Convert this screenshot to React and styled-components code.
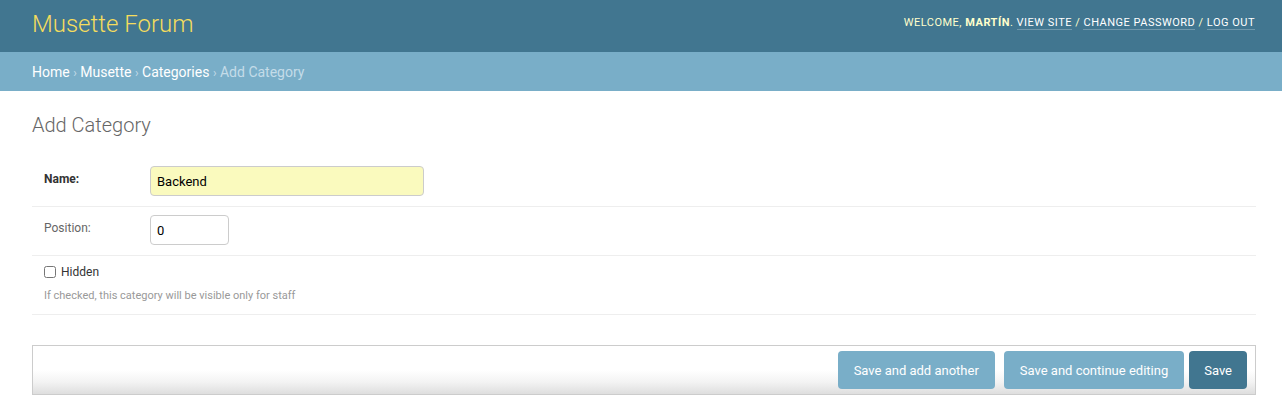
import React, { useState } from 'react';
import styled, { createGlobalStyle } from 'styled-components';

const GlobalStyle = createGlobalStyle`
    body {
        margin: 0;
        background: #fff;
        font-family: Roboto, "Liberation Sans", sans-serif;
        color: #333;
    }
`;

function App() {
    const [name, setName] = useState('Backend');
    const [position, setPosition] = useState('0');
    const [hidden, setHidden] = useState(false);

    return (
        <>
            <GlobalStyle />
            <Header>
                <Branding>Musette Forum</Branding>
                <UserTools>
                    Welcome, <strong>Martín</strong>.{' '}
                    <ToolLink>View site</ToolLink> / <ToolLink>Change password</ToolLink> /{' '}
                    <ToolLink>Log out</ToolLink>
                </UserTools>
            </Header>

            <Breadcrumbs>
                <Crumb>Home</Crumb> <Sep>›</Sep> <Crumb>Musette</Crumb> <Sep>›</Sep>{' '}
                <Crumb>Categories</Crumb> <Sep>›</Sep> <Current>Add Category</Current>
            </Breadcrumbs>

            <Content>
                <Title>Add Category</Title>

                <form onSubmit={(e) => e.preventDefault()}>
                    <FormRow $pt={10} $pb={10}>
                        <Label $required>Name:</Label>
                        <TextInput $width={274} $filled value={name} onChange={(e) => setName(e.target.value)} />
                    </FormRow>
                    <FormRow $pt={8} $pb={10}>
                        <Label>Position:</Label>
                        <TextInput $width={79} value={position} onChange={(e) => setPosition(e.target.value)} />
                    </FormRow>
                    <CheckRow>
                        <CheckLabel>
                            <Checkbox type="checkbox" checked={hidden} onChange={(e) => setHidden(e.target.checked)} />
                            Hidden
                        </CheckLabel>
                        <Help>If checked, this category will be visible only for staff</Help>
                    </CheckRow>

                    <SubmitRow>
                        <SubmitButton type="button">Save and add another</SubmitButton>
                        <SubmitButton type="button">Save and continue editing</SubmitButton>
                        <SubmitButton type="submit" $primary>Save</SubmitButton>
                    </SubmitRow>
                </form>
            </Content>
        </>
    );
}

const Header = styled.header`
    height: 52px;
    background: #417690;
    display: flex;
    align-items: center;
    justify-content: space-between;
    padding: 0 27px 0 32px;
`;

const Branding = styled.h1`
    margin: 0;
    margin-top: -4px;
    font-size: 24px;
    font-weight: 300;
    color: #f5dd5d;
`;

const UserTools = styled.div`
    font-size: 11px;
    letter-spacing: 0.5px;
    text-transform: uppercase;
    color: #ffc;
    margin-top: -8px;

    strong {
        font-weight: 700;
        color: #ffc;
    }
`;

const ToolLink = styled.a`
    color: #fff;
    text-decoration: none;
    border-bottom: 1px solid rgba(255, 255, 255, 0.25);
    cursor: pointer;
`;

const Breadcrumbs = styled.nav`
    height: 39px;
    line-height: 41px;
    box-sizing: border-box;
    background: #79aec8;
    padding: 0 32px;
    font-size: 14px;
    color: #fff;
    overflow: hidden;
`;

const Crumb = styled.a`
    color: #fff;
    cursor: pointer;
`;

const Sep = styled.span`
    color: #c4dce8;
    font-size: 12px;
`;

const Current = styled.span`
    color: #c4dce8;
`;

const Content = styled.main`
    padding: 22px 26px 20px 32px;
`;

const Title = styled.h2`
    margin: 0 0 19px;
    font-size: 20px;
    font-weight: 300;
    color: #666;
`;

const FormRow = styled.div`
    display: flex;
    align-items: flex-start;
    padding: ${(p) => p.$pt}px 12px ${(p) => p.$pb}px;
    border-bottom: 1px solid #eee;
`;

const Label = styled.label`
    width: 106px;
    padding-top: 6px;
    font-size: 12px;
    font-weight: ${(p) => (p.$required ? 700 : 400)};
    color: ${(p) => (p.$required ? '#333' : '#666')};
`;

const TextInput = styled.input`
    box-sizing: border-box;
    width: ${(p) => p.$width}px;
    height: 30px;
    padding: 5px 6px;
    border: 1px solid #ccc;
    border-radius: 4px;
    background: ${(p) => (p.$filled ? '#fafabe' : '#fff')};
    font-family: Roboto, "Liberation Sans", sans-serif;
    font-size: 13px;
    color: #000;
    outline: none;
`;

const CheckRow = styled.div`
    padding: 9px 12px 12px;
    border-bottom: 1px solid #eee;
`;

const CheckLabel = styled.label`
    display: flex;
    align-items: center;
    gap: 5px;
    font-size: 12px;
    color: #333;
`;

const Checkbox = styled.input`
    margin: 0;
    width: 12px;
    height: 12px;
`;

const Help = styled.div`
    margin-top: 10px;
    font-size: 11px;
    color: #999;
`;

const SubmitRow = styled.div`
    margin-top: 30px;
    display: flex;
    justify-content: flex-end;
    gap: 9px;
    padding: 5px 8px;
    border: 1px solid #ccc;
    background: linear-gradient(to bottom, #fff 0%, #fff 50%, #f3f3f3 75%, #dedede 100%);
`;

const SubmitButton = styled.button`
    height: 38px;
    padding: 0 ${(p) => (p.$primary ? 15 : 16)}px;
    border: none;
    border-radius: 4px;
    background: ${(p) => (p.$primary ? '#417690' : '#79aec8')};
    color: #fff;
    font-family: Roboto, "Liberation Sans", sans-serif;
    font-size: 13px;
    cursor: pointer;
    margin-left: ${(p) => (p.$primary ? '-4px' : '0')};
`;

export default App;
